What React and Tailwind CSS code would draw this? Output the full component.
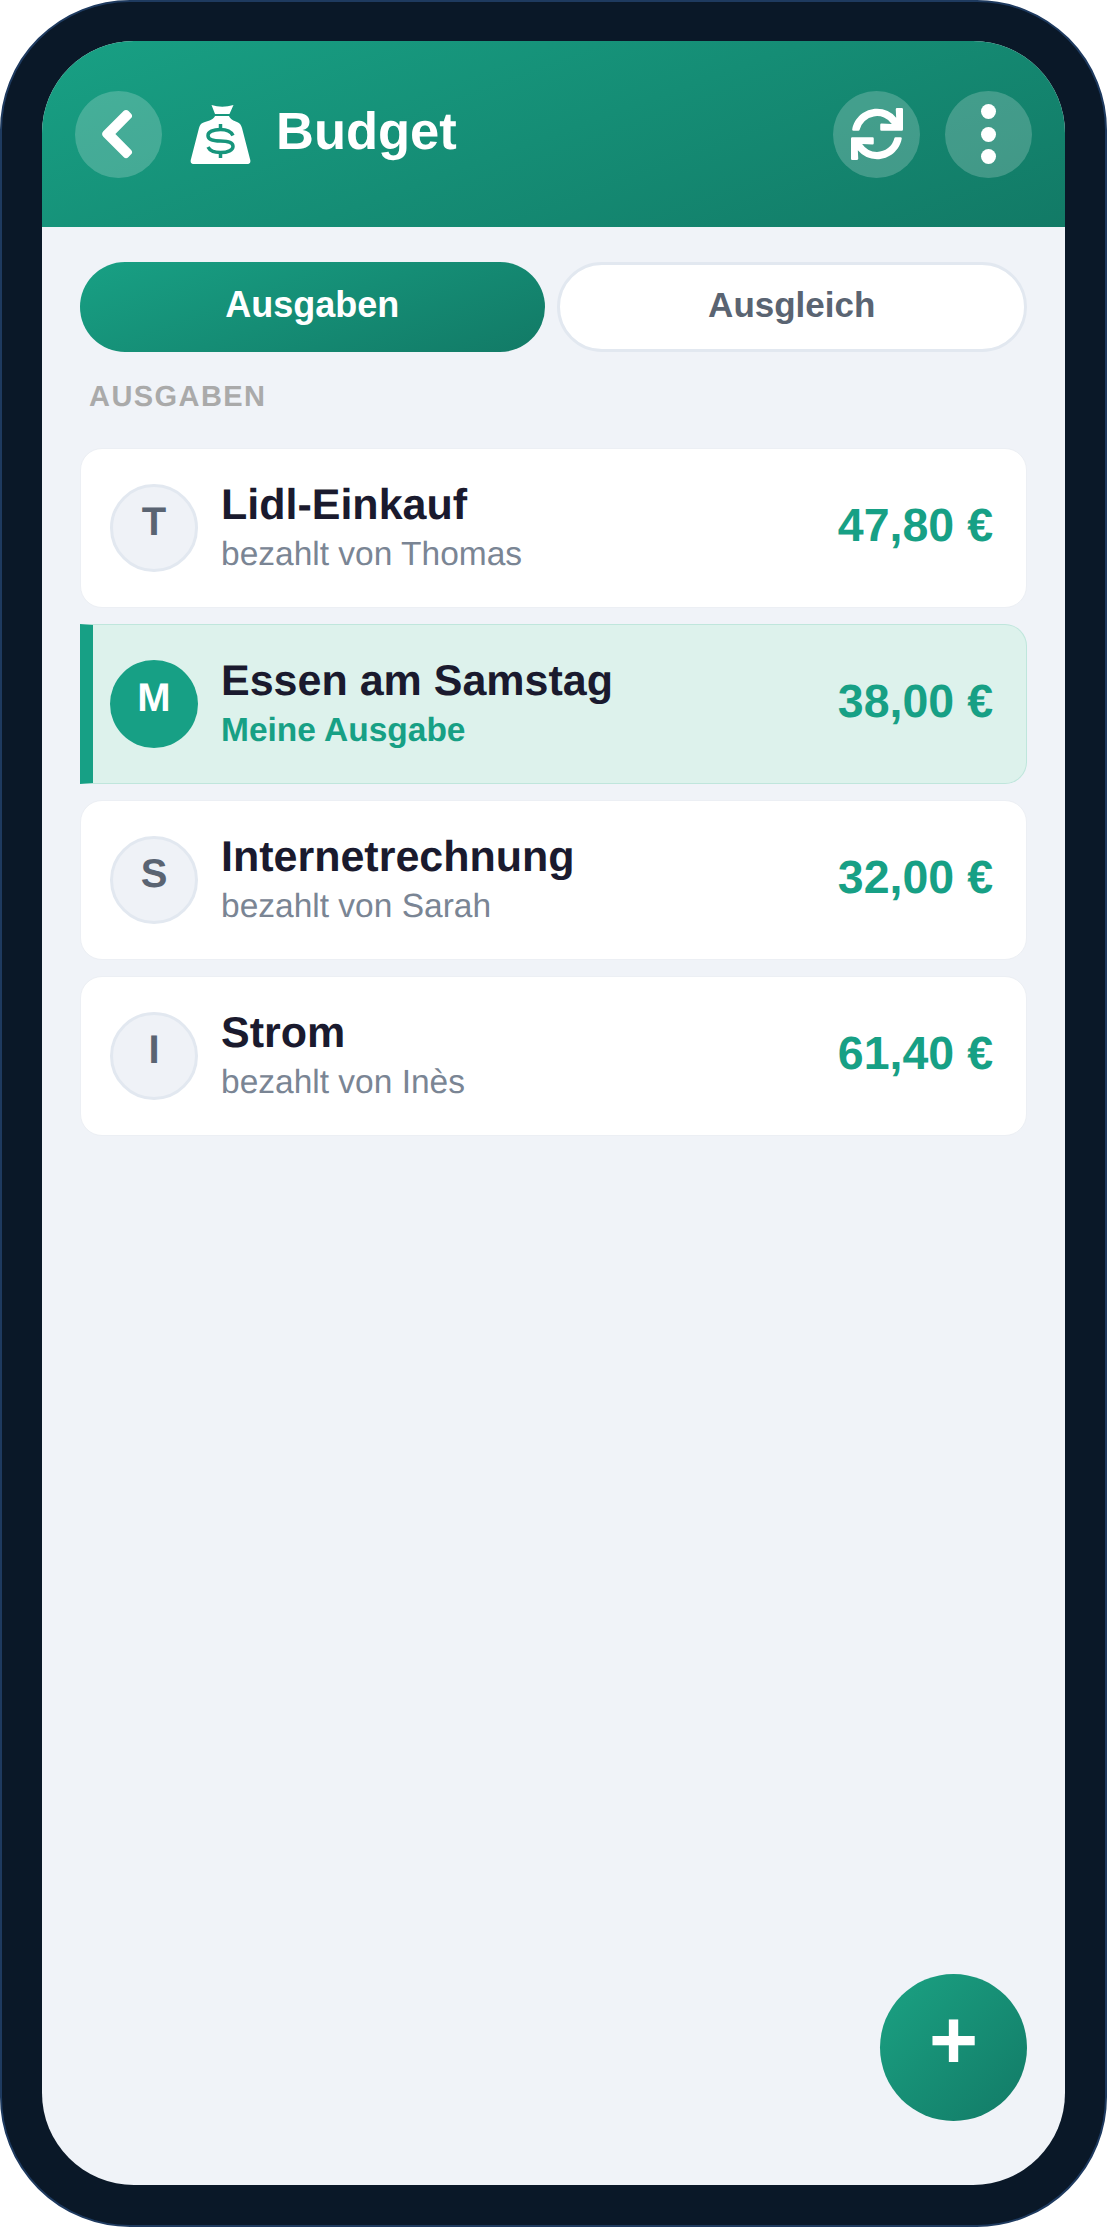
import { FaChevronLeft, FaSync } from "react-icons/fa";

const expenses = [
  { id: 1, initial: "T", title: "Lidl-Einkauf", sub: "bezahlt von Thomas", amount: "47,80 €" },
  { id: 2, initial: "M", title: "Essen am Samstag", sub: "Meine Ausgabe", amount: "38,00 €", mine: true },
  { id: 3, initial: "S", title: "Internetrechnung", sub: "bezahlt von Sarah", amount: "32,00 €" },
  { id: 4, initial: "I", title: "Strom", sub: "bezahlt von Inès", amount: "61,40 €" },
];

function MoneyBag() {
  return (
    <svg viewBox="0 0 90 90" className="h-[90px] w-[90px] shrink-0 -mx-[21px]">
      <path d="M41.500 14 Q52 17.500 63.500 14 L59.500 23 L45 23 Z" fill="#fff" />
      <path
        d="M45 25 L59 25 C60 28 64 30 67 31 C70 32 71 34 72 37 L80 68 C81 71 80 73 77 73 L24 73 C21 73 20 71 21 68 L29 37 C30 34 31 32 35 31 C39 30 44 28 45 25 Z"
        fill="#fff"
      />
      <g fill="none" stroke="#17957c" strokeWidth="3.500">
        <path d="M63 44.500 C61 40.500 56 38.500 50.500 38.500 C43 38.500 38 41 38 44.500 C38 48 43 50 50.500 50 C58 50 63 52 63 55.500 C63 59 58 61.500 50.500 61.500 C45 61.500 40 60 38 56" />
        <path d="M50.500 33 V38 M50.500 62 V67" />
      </g>
    </svg>
  );
}

function RoundButton({ children }) {
  return (
    <button className="flex h-[87px] w-[87px] shrink-0 items-center justify-center rounded-full bg-white/20 text-white">
      {children}
    </button>
  );
}

function ExpenseCard({ item }) {
  return (
    <div
      className={
        item.mine
          ? "flex h-[160px] items-center rounded-r-[22px] border border-l-[13px] border-[#bfe6dc] border-l-[#17a085] bg-[#ddf2ec] pl-[17px] pr-[33px]"
          : "flex h-[160px] items-center rounded-[22px] border border-[#eceff4] bg-white pl-[29px] pr-[33px]"
      }
    >
      <div
        className={
          item.mine
            ? "flex h-[88px] w-[88px] shrink-0 items-center justify-center rounded-full bg-[#17a085] text-[40px] font-bold text-white"
            : "flex h-[88px] w-[88px] shrink-0 items-center justify-center rounded-full border-[3px] border-[#e2e8f0] bg-[#eff2f7] text-[40px] font-bold text-[#5a6472]"
        }
      >
        <span className="-translate-y-[6px]">{item.initial}</span>
      </div>
      <div className="ml-[23px] min-w-0 flex-1 translate-y-[1.500px]">
        <p className="text-[43px] leading-[50px] font-bold text-[#1a1a2e]">{item.title}</p>
        <p
          className={
            item.mine
              ? "text-[33.500px] leading-[50px] font-bold text-[#17a085]"
              : "text-[33.500px] leading-[50px] text-[#7a8594]"
          }
        >
          {item.sub}
        </p>
      </div>
      <span className="-translate-y-[2px] text-[46.500px] font-bold text-[#17a085]">{item.amount}</span>
    </div>
  );
}

export default function App() {
  return (
    <div className="h-[2227px] w-[1107px] bg-white font-['Liberation_Sans',Arial,sans-serif] [text-rendering:geometricPrecision]">
      <div className="h-full rounded-[130px] border-2 border-[#1e3a5f] bg-[#0a1828] pt-[39px] pr-[40px] pb-[40px] pl-[40px]">
        {/* screen */}
        <div className="relative flex h-full flex-col overflow-hidden rounded-[92px] bg-[#f0f3f8]">
          <header className="flex h-[186px] shrink-0 items-center bg-[linear-gradient(160deg,#18a084,#127a66)] px-[33px]">
            <RoundButton>
              <FaChevronLeft className="h-[54px] w-[54px] -translate-x-[2px]" stroke="currentColor" strokeWidth={18} />
            </RoundButton>
            <div className="ml-[29px] translate-y-[2px]">
              <MoneyBag />
            </div>
            <h1 className="ml-[37px] flex-1 -translate-y-[2px] text-[52.500px] font-bold text-white">Budget</h1>
            <div className="flex gap-[25px]">
              <RoundButton>
                <FaSync className="h-[52px] w-[52px]" />
              </RoundButton>
              <RoundButton>
                <span className="flex flex-col gap-[7.500px]">
                  <span className="h-[15px] w-[15px] rounded-full bg-white" />
                  <span className="h-[15px] w-[15px] rounded-full bg-white" />
                  <span className="h-[15px] w-[15px] rounded-full bg-white" />
                </span>
              </RoundButton>
            </div>
          </header>

          <main className="flex-1 pt-[35px] pr-[38px] pl-[38px]">
            <div className="flex gap-[12px]">
              <button className="h-[90px] flex-1 rounded-[45px] bg-[linear-gradient(160deg,#18a084,#127a66)] pb-[4px] text-[36px] font-bold text-white">
                Ausgaben
              </button>
              <button className="h-[90px] flex-1 rounded-[45px] border-[3px] border-[#e2e8f0] bg-white pb-[4px] text-[35px] font-bold text-[#5a6472]">
                Ausgleich
              </button>
            </div>

            <p className="mt-[27px] pl-[9px] text-[29px] leading-[36px] font-bold tracking-[1.440px] text-[#aaaaaa] uppercase">
              Ausgaben
            </p>

            <div className="mt-[33px] flex flex-col gap-[16px]">
              {expenses.map((item) => (
                <ExpenseCard key={item.id} item={item} />
              ))}
            </div>
          </main>

          <button className="absolute right-[38px] bottom-[64px] flex h-[147px] w-[147px] items-center justify-center rounded-full bg-[linear-gradient(135deg,#1ba283,#127a66)] text-[84px] leading-none font-bold text-white">
            <span className="-translate-y-[8px]">+</span>
          </button>
        </div>
      </div>
    </div>
  );
}
